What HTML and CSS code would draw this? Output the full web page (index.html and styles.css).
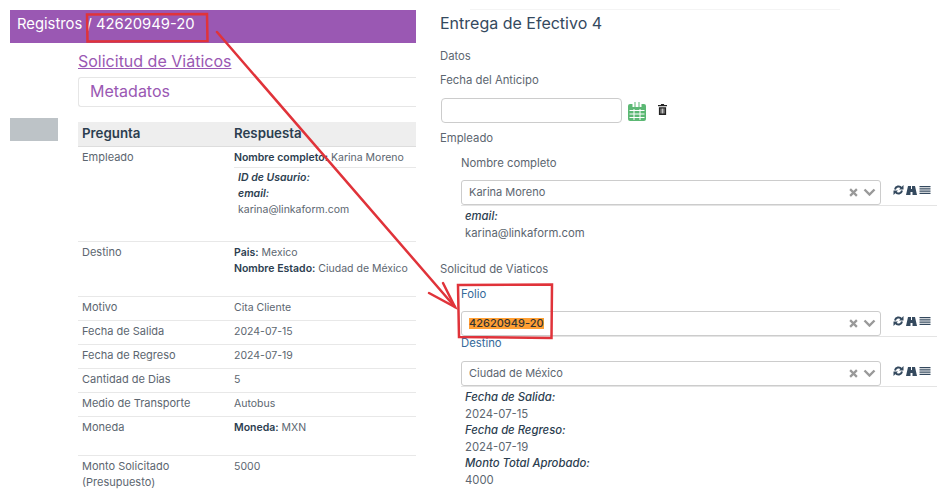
FILE: index.html

```html
<!DOCTYPE html>
<html lang="es">
<head>
    <meta charset="UTF-8">
    <title>Registros - Entrega de Efectivo</title>
    <link rel="stylesheet" href="styles.css">
</head>
<body>
    <div class="page">
        <section class="record">
            <div class="topbar">Registros / 42620949-20</div>
            <div class="record-body">
                <aside class="side"><div class="side-block"></div></aside>
                <div class="record-main">
                    <a class="form-link" href="#">Solicitud de Viáticos</a>
                    <div class="meta-card">Metadatos</div>
                    <div class="qa qa-head"><div>Pregunta</div><div>Respuesta</div></div>
                    <div class="qa row-employee">
                        <div>Empleado</div>
                        <div>
                            <div class="sub-first"><b>Nombre completo:</b> Karina Moreno</div>
                            <div class="sub-extra">
                                <div><b><i>ID de Usaurio:</i></b></div>
                                <div><b><i>email:</i></b></div>
                                <div>karina@linkaform.com</div>
                            </div>
                        </div>
                    </div>
                    <div class="qa row-dest">
                        <div>Destino</div>
                        <div>
                            <div><b>Pais:</b> Mexico</div>
                            <div><b>Nombre Estado:</b> Ciudad de México</div>
                        </div>
                    </div>
                    <div class="qa"><div>Motivo</div><div>Cita Cliente</div></div>
                    <div class="qa"><div>Fecha de Salida</div><div>2024-07-15</div></div>
                    <div class="qa"><div>Fecha de Regreso</div><div>2024-07-19</div></div>
                    <div class="qa"><div>Cantidad de Dias</div><div>5</div></div>
                    <div class="qa"><div>Medio de Transporte</div><div>Autobus</div></div>
                    <div class="qa row-money"><div>Moneda</div><div><b>Moneda:</b> MXN</div></div>
                    <div class="qa row-last"><div>Monto Solicitado (Presupuesto)</div><div>5000</div></div>
                </div>
            </div>
        </section>

        <section class="delivery">
            <div class="top-shadow"></div>
            <h2>Entrega de Efectivo 4</h2>
            <div class="lbl lbl-datos">Datos</div>
            <div class="lbl lbl-fecha">Fecha del Anticipo</div>
            <div class="date-row">
                <div class="date-input"></div>
                <svg class="cal" viewBox="0 0 18 20" width="18" height="20">
                    <path fill="#5cb874" d="M2 3h2.5v3h2V1h1v5h3V1h1v5h2V3H16a2 2 0 0 1 2 2v13a2 2 0 0 1-2 2H2a2 2 0 0 1-2-2V5a2 2 0 0 1 2-2z"/>
                    <path fill="none" stroke="#fff" d="M1.5 9.5h15M1.5 13h15M1.5 16.5h15M6 8v11M12 8v11"/>
                </svg>
                <svg class="trash" viewBox="0 0 10 12" width="9" height="11">
                    <path fill="#222" d="M3.5 0h3l.5 1h3v1.500H0V1h3zM1 3.5h8V12H1zM3 5v5.500h.8V5zm1.600 0v5.500h.8V5zm1.600 0v5.500H7V5z"/>
                </svg>
            </div>
            <div class="lbl lbl-emp">Empleado</div>
            <div class="group">
                <div class="lbl lbl-name">Nombre completo</div>
                <div class="select-row">
                    <div class="select"><span>Karina Moreno</span>
                        <svg class="sel-x" viewBox="0 0 8 8" width="9" height="9"><path stroke="#999" stroke-width="2" d="M1 1l6 6M7 1l-6 6"/></svg>
                        <svg class="sel-c" viewBox="0 0 12 8" width="13" height="8"><path fill="none" stroke="#999" stroke-width="2.4" d="M1 1.5l5 5 5-5"/></svg>
                    </div>
                    <div class="tools">
                        <svg viewBox="0 0 10 10" width="11" height="10"><path fill="none" stroke="#34495e" stroke-width="2" d="M1.5 4.500a3.600 3.600 0 0 1 6.500-1.500M8.500 5.500a3.600 3.600 0 0 1-6.500 1.500"/><path fill="#34495e" d="M10 0v4.500H5.500zM0 10V5.500h4.500z"/></svg>
                        <svg viewBox="0 0 11 9" width="11" height="9"><path fill="#34495e" d="M2 0h3v3h1V0h3l2 9H6.500V6h-2v3H0z"/></svg>
                        <svg viewBox="0 0 11 9" width="12" height="9"><path stroke="#34495e" stroke-width="1.200" d="M0 .6h11M0 2.900h11M0 5.100h11M0 7.400h11"/></svg>
                    </div>
                </div>
                <div class="extra extra-emp">
                    <div class="ex-t">email:</div>
                    <div>karina@linkaform.com</div>
                </div>
            </div>
            <div class="lbl lbl-sol">Solicitud de Viaticos</div>
            <div class="group">
                <div class="lbl lbl-folio">Folio</div>
                <div class="select-row">
                    <div class="select"><span class="hit">42620949-20</span>
                        <svg class="sel-x" viewBox="0 0 8 8" width="9" height="9"><path stroke="#999" stroke-width="2" d="M1 1l6 6M7 1l-6 6"/></svg>
                        <svg class="sel-c" viewBox="0 0 12 8" width="13" height="8"><path fill="none" stroke="#999" stroke-width="2.4" d="M1 1.5l5 5 5-5"/></svg>
                    </div>
                    <div class="tools">
                        <svg viewBox="0 0 10 10" width="11" height="10"><path fill="none" stroke="#34495e" stroke-width="2" d="M1.5 4.500a3.600 3.600 0 0 1 6.500-1.500M8.500 5.500a3.600 3.600 0 0 1-6.500 1.500"/><path fill="#34495e" d="M10 0v4.500H5.500zM0 10V5.500h4.500z"/></svg>
                        <svg viewBox="0 0 11 9" width="11" height="9"><path fill="#34495e" d="M2 0h3v3h1V0h3l2 9H6.500V6h-2v3H0z"/></svg>
                        <svg viewBox="0 0 11 9" width="12" height="9"><path stroke="#34495e" stroke-width="1.200" d="M0 .6h11M0 2.900h11M0 5.100h11M0 7.400h11"/></svg>
                    </div>
                </div>
                <div class="lbl lbl-dest">Destino</div>
                <div class="select-row">
                    <div class="select"><span>Ciudad de México</span>
                        <svg class="sel-x" viewBox="0 0 8 8" width="9" height="9"><path stroke="#999" stroke-width="2" d="M1 1l6 6M7 1l-6 6"/></svg>
                        <svg class="sel-c" viewBox="0 0 12 8" width="13" height="8"><path fill="none" stroke="#999" stroke-width="2.4" d="M1 1.5l5 5 5-5"/></svg>
                    </div>
                    <div class="tools">
                        <svg viewBox="0 0 10 10" width="11" height="10"><path fill="none" stroke="#34495e" stroke-width="2" d="M1.5 4.500a3.600 3.600 0 0 1 6.500-1.500M8.500 5.500a3.600 3.600 0 0 1-6.500 1.500"/><path fill="#34495e" d="M10 0v4.500H5.500zM0 10V5.500h4.500z"/></svg>
                        <svg viewBox="0 0 11 9" width="11" height="9"><path fill="#34495e" d="M2 0h3v3h1V0h3l2 9H6.500V6h-2v3H0z"/></svg>
                        <svg viewBox="0 0 11 9" width="12" height="9"><path stroke="#34495e" stroke-width="1.200" d="M0 .6h11M0 2.900h11M0 5.100h11M0 7.400h11"/></svg>
                    </div>
                </div>
                <div class="extra extra-dest">
                    <div class="ex-t">Fecha de Salida:</div>
                    <div>2024-07-15</div>
                    <div class="ex-t">Fecha de Regreso:</div>
                    <div>2024-07-19</div>
                    <div class="ex-t">Monto Total Aprobado:</div>
                    <div>4000</div>
                </div>
            </div>
        </section>
    </div>

    <!-- red marks drawn over the screenshot -->
    <svg class="marks" viewBox="0 0 947 500" width="947" height="500">
        <g fill="none" stroke="#e0333a" stroke-width="2.5" stroke-linecap="round">
            <path d="M87 14.5L207 14L207.5 41L87.5 41.500Z"/>
            <path d="M458 285L552 284.500L551.500 338L459 337Z"/>
            <path d="M217 32L455 307"/>
            <path d="M443 283L455 307L429 293"/>
        </g>
    </svg>
</body>
</html>
```

FILE: styles.css

```css
* {
    box-sizing: border-box;
}
html, body {
    margin: 0;
    height: 500px;
    overflow: hidden;
}
body {
    font-family: Inter, "Noto Sans", sans-serif;
    font-size: 10.5px;
    color: #5c6670;
    background: #fff;
    position: relative;
}
b {
    color: #2c3e50;
    font-weight: 600;
}
.page {
    display: flex;
    padding: 10px 0 0 10px;
}

/* left panel */
.record {
    width: 406px;
    flex-shrink: 0;
}
.topbar {
    height: 33px;
    background: #9a58b3;
    color: #fff;
    font-size: 14.8px;
    line-height: 29px;
    padding-left: 7px;
}
.record-body {
    display: flex;
}
.side {
    width: 68px;
    flex-shrink: 0;
    padding-top: 75px;
}
.side-block {
    width: 48px;
    height: 23px;
    background: #bdc3c7;
}
.record-main {
    flex: 1;
    min-width: 0;
}
.form-link {
    display: block;
    margin-top: 9px;
    height: 25px;
    font-size: 16px;
    line-height: 19px;
    color: #9a58b3;
}
.meta-card {
    height: 30px;
    border: 1px solid #e6e6e6;
    border-right: none;
    border-radius: 3px 0 0 3px;
    color: #9a58b3;
    font-size: 16px;
    line-height: 26px;
    padding-left: 11px;
    margin-bottom: 15px;
}
.qa {
    display: grid;
    grid-template-columns: 152px 1fr;
    border-top: 1px solid #e8e8e8;
    min-height: 24px;
    line-height: 16px;
    padding: 3px 0 0 4px;
}
.qa > div:first-child {
    font-size: 11px;
    margin-top: -1px;
}
.qa-head {
    height: 25px;
    background: #eee;
    border-top: none;
    border-bottom: 1px solid #ddd;
    color: #2c3e50;
    font-size: 13.3px;
    font-weight: 600;
    line-height: 17px;
}
.qa-head > div:first-child {
    font-size: 13.3px;
    margin-top: 0;
}
.row-employee { height: 94px; }
.row-dest { height: 55px; }
.row-money { height: 39px; }
.row-last { height: 44px; }
.qa-head + .qa {
    border-top: none;
}
.sub-first {
    border-bottom: 1px solid #e8e8e8;
    padding-bottom: 1px;
}
.sub-extra {
    padding: 2px 0 0 4px;
}
.sub-extra i, .ex-t {
    font-style: italic;
}

/* right panel */
.delivery {
    flex: 1;
    min-width: 0;
    padding: 0 10px 0 24px;
    margin-top: -10px;
    position: relative;
    font-size: 11.3px;
}
.top-shadow {
    position: absolute;
    top: 9px;
    left: 54px;
    width: 370px;
    height: 1px;
    background: #f4f4f4;
}
.delivery h2 {
    margin: 0;
    padding-top: 15px;
    height: 48px;
    font-size: 16px;
    font-weight: 400;
    line-height: 17px;
    color: #34495e;
}
.lbl {
    line-height: 16px;
}
.lbl-datos { margin-bottom: 8px; }
.lbl-fecha { margin-bottom: 10px; }
.date-row {
    display: flex;
    align-items: center;
    height: 25px;
    margin-left: 1px;
}
.date-input {
    width: 181px;
    height: 25px;
    border: 1px solid #ccc;
    border-radius: 4px;
}
.cal {
    margin-left: 6px;
}
.trash {
    margin-left: 12px;
    margin-bottom: 2px;
}
.lbl-emp { margin-top: 7px; }
.group {
    padding-left: 21px;
}
.lbl-name {
    margin-top: 9px;
    margin-bottom: 9px;
}
.select-row {
    display: flex;
    align-items: flex-start;
    border-bottom: 1px solid #e4e4e4;
    height: 26px;
}
.select {
    width: 420px;
    height: 25px;
    border: 1px solid #ccc;
    border-radius: 3px;
    display: flex;
    align-items: center;
    padding: 0 4px 1px 7px;
    flex-shrink: 0;
    font-size: 11px;
}
.select span {
    flex: 1;
}
.select .hit {
    flex: none;
    margin-right: auto;
    background: #ff9f33;
    color: #333;
    font-weight: 500;
    line-height: 11px;
}
.sel-x {
    margin-right: 5px;
}
.tools {
    display: flex;
    align-items: center;
    gap: 2px;
    padding: 5px 0 0 12px;
}
.extra {
    padding-left: 4px;
}
.extra-emp {
    padding-top: 2px;
    line-height: 16.5px;
    height: 37px;
}
.ex-t {
    color: #2c3e50;
    font-weight: 500;
}
.extra-dest {
    line-height: 16.5px;
    padding-top: 2px;
}
.lbl-sol {
    margin-top: 18px;
}
.lbl-folio {
    margin-top: 9px;
    margin-bottom: 9px;
    color: #34699a;
}
.lbl-dest {
    margin-top: -2px;
    margin-bottom: 10px;
    color: #34699a;
}

.marks {
    position: absolute;
    left: 0;
    top: 0;
    pointer-events: none;
}
```
